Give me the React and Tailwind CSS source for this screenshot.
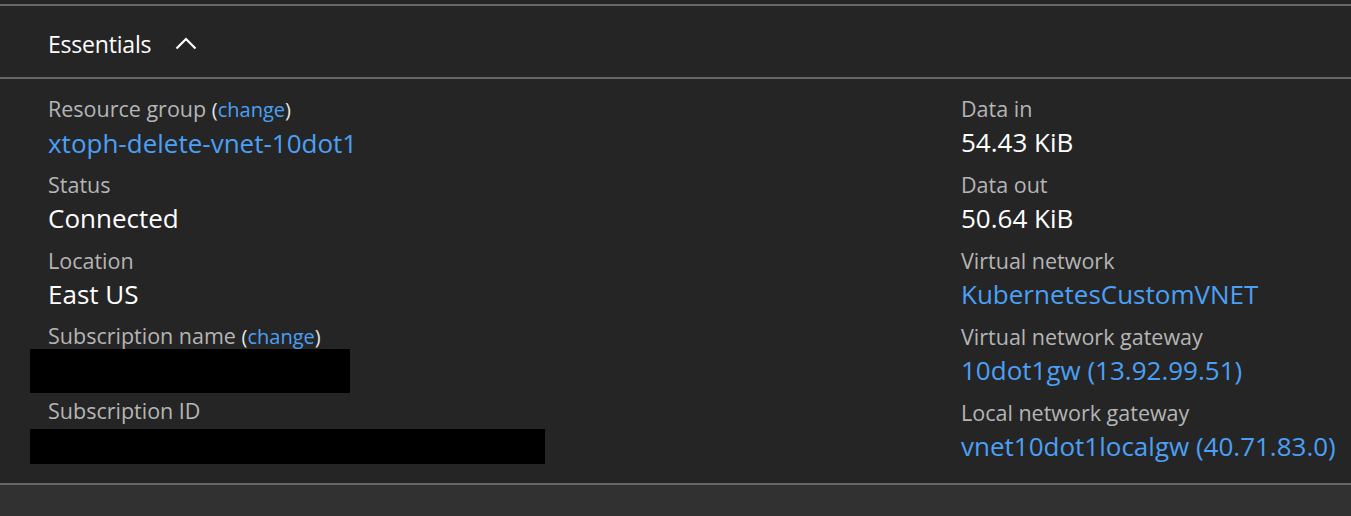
export default function App() {
  const link = "text-[#4ba0f5]";
  const change = (
    <span className="text-[20px]">
      <span className="text-[#e6e6e6]">(</span>
      <span className={link}>change</span>
      <span className="text-[#e6e6e6]">)</span>
    </span>
  );
  return (
    <div className="w-[1351px] h-[516px] bg-[#313131] font-['Open_Sans','Noto_Sans',sans-serif] overflow-hidden">
      <div className="bg-[#252525] h-[4px]" />
      <div className="h-[2px] bg-[#666666]" />
      <div className="bg-[#252525] h-[71px] flex items-center pl-[48px] gap-[24px] pt-[6px]">
        <span className="text-white text-[23px] tracking-[-0.2px]">Essentials</span>
        <svg width="22" height="14" viewBox="0 0 22 14" className="mb-[1px]">
          <path d="M1.5 11.5 L11 2 L20.5 11.5" stroke="white" strokeWidth="2.2" fill="none" />
        </svg>
      </div>
      <div className="h-[2px] bg-[#666666]" />
      <div className="bg-[#252525] h-[404px] flex pt-[16px]">
        <div className="w-[913px] flex flex-col">
          <Field label={<>Resource group {change}</>} value="xtoph-delete-vnet-10dot1" isLink />
          <Field label="Status" value="Connected" />
          <Field label="Location" value="East US" />
          <div className="h-[76px] flex flex-col">
            <div className="pl-[48px] h-[27px] text-[21.5px] text-[#b5b5b5] leading-[28px] -mt-[1px]">
              Subscription name {change}
            </div>
            <div className="ml-[30px] w-[320px] h-[44px] bg-black" />
          </div>
          <div className="h-[76px] flex flex-col">
            <div className="pl-[48px] h-[32px] text-[21.5px] text-[#b5b5b5] leading-[28px] -mt-[2px]">Subscription ID</div>
            <div className="ml-[30px] w-[515px] h-[35px] bg-black" />
          </div>
        </div>
        <div className="flex flex-col pl-[48px]">
          <Field label="Data in" value="54.43 KiB" right />
          <Field label="Data out" value="50.64 KiB" right />
          <Field label="Virtual network" value="KubernetesCustomVNET" isLink right />
          <Field label="Virtual network gateway" value="10dot1gw (13.92.99.51)" isLink right />
          <Field label="Local network gateway" value="vnet10dot1localgw (40.71.83.0)" isLink right />
        </div>
      </div>
      <div className="h-[2px] bg-[#666666]" />
    </div>
  );
}

function Field({ label, value, isLink, right }) {
  return (
    <div className={`h-[76px] flex flex-col ${right ? "" : "pl-[48px]"}`}>
      <div className="text-[21.5px] text-[#b5b5b5] leading-[28px]">{label}</div>
      <div className={`text-[26px] leading-[38px] ${isLink ? "text-[#4ba0f5]" : "text-white"}`}>{value}</div>
    </div>
  );
}
